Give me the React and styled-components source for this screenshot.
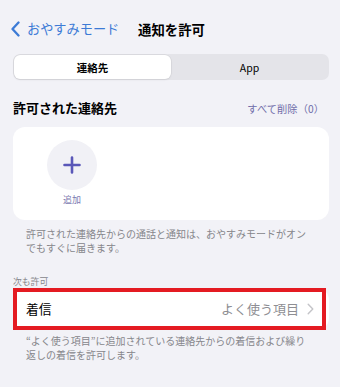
import React from 'react'
import styled, { createGlobalStyle } from 'styled-components'

const GlobalStyle = createGlobalStyle`
  html, body {
    margin: 0;
    padding: 0;
    background: #f2f2f7;
  }
  body {
    font-family: "Noto Sans CJK JP", "Noto Sans", sans-serif;
    color: #000;
    -webkit-font-smoothing: antialiased;
  }
`

const Page = styled.div`
  width: 340px;
  height: 387px;
  overflow: hidden;
  background: #f2f2f7;
`

const Header = styled.header`
  display: flex;
  align-items: center;
  height: 40px;
  padding: 9px 0 0 10px;
`

const Back = styled.div`
  display: flex;
  align-items: center;
  gap: 6px;
  width: 128px;
  color: #3d7bd6;
  font-size: 13.2px;
  line-height: 16px;
  svg {
    display: block;
  }
`

const Title = styled.h1`
  margin: 0;
  font-size: 13.4px;
  line-height: 16px;
  font-weight: 700;
`

const Segmented = styled.div`
  display: grid;
  grid-template-columns: 1fr 1fr;
  margin: 5px 11px 0 13px;
  height: 26px;
  padding: 1px;
  box-sizing: border-box;
  background: #e4e4e9;
  border-radius: 7px;
`

const Segment = styled.div`
  display: flex;
  align-items: center;
  justify-content: center;
  font-size: 10.5px;
  font-weight: ${p => (p.$active ? 700 : 400)};
  border-radius: 6px;
  background: ${p => (p.$active ? '#fff' : 'transparent')};
  box-shadow: ${p => (p.$active ? '0 0 0 0.5px #cfcfd4, 0 1px 2px rgba(0,0,0,0.08)' : 'none')};
`

const SectionHead = styled.div`
  display: flex;
  align-items: center;
  justify-content: space-between;
  margin: 20px 16px 0 13px;
  height: 16px;
`

const SectionTitle = styled.h2`
  margin: 0;
  font-size: 13px;
  line-height: 16px;
  font-weight: 700;
`

const ClearAll = styled.span`
  font-size: 10.2px;
  color: #6f6ca9;
  letter-spacing: 0.1px;
`

const Card = styled.div`
  margin: 0 11px 0 13px;
  background: #fff;
  border-radius: 12px;
`

const ContactCard = styled(Card)`
  margin-top: 11px;
  height: 93px;
  box-sizing: border-box;
  padding: 13px 0 0 34px;
`

const AddButton = styled.div`
  display: flex;
  flex-direction: column;
  align-items: center;
  width: 50px;
`

const AddCircle = styled.div`
  display: flex;
  align-items: center;
  justify-content: center;
  width: 50px;
  height: 50px;
  border-radius: 50%;
  background: #f1f1f6;
`

const AddLabel = styled.span`
  margin-top: 4px;
  font-size: 9px;
  line-height: 12px;
  color: #7b79b0;
`

const Footnote = styled.p`
  margin: ${p => p.$top}px 30px 0 26px;
  font-size: 10px;
  line-height: 14px;
  color: #86868b;
`

const GroupLabel = styled.div`
  margin: 21px 0 0 13px;
  font-size: 8.8px;
  line-height: 12px;
  color: #86868b;
`

const RowWrap = styled.div`
  position: relative;
  margin-top: 0;
`

const Row = styled(Card)`
  display: flex;
  align-items: center;
  height: 42px;
  padding: 0 15px 0 13px;
`

const RowLabel = styled.span`
  flex: 1;
  font-size: 12.8px;
  line-height: 16px;
`

const RowValue = styled.span`
  font-size: 13px;
  line-height: 16px;
  color: #8e8e93;
  margin-right: 8px;
`

const Highlight = styled.div`
  position: absolute;
  left: 13px;
  top: 0;
  width: 313px;
  height: 42px;
  box-sizing: border-box;
  border: 4px solid #e41b22;
  pointer-events: none;
`

export default function App() {
  return (
    <Page>
      <GlobalStyle />
      <Header>
        <Back>
          <svg width="11" height="16" viewBox="0 0 11 16">
            <path d="M8.5 1.5 L2.5 8 L8.5 14.5" fill="none" stroke="#3d7bd6" strokeWidth="2.3" strokeLinecap="round" strokeLinejoin="round" />
          </svg>
          <span>おやすみモード</span>
        </Back>
        <Title>通知を許可</Title>
      </Header>

      <Segmented>
        <Segment $active>連絡先</Segment>
        <Segment>App</Segment>
      </Segmented>

      <SectionHead>
        <SectionTitle>許可された連絡先</SectionTitle>
        <ClearAll>すべて削除（0）</ClearAll>
      </SectionHead>

      <ContactCard>
        <AddButton>
          <AddCircle>
            <svg width="18" height="18" viewBox="0 0 18 18">
              <path d="M9 1.5 V16.5 M1.5 9 H16.5" stroke="#5a57b8" strokeWidth="2.6" strokeLinecap="round" />
            </svg>
          </AddCircle>
          <AddLabel>追加</AddLabel>
        </AddButton>
      </ContactCard>

      <Footnote $top={7}>
        許可された連絡先からの通話と通知は、おやすみモードがオンでもすぐに届きます。
      </Footnote>

      <GroupLabel>次も許可</GroupLabel>

      <RowWrap>
        <Row>
          <RowLabel>着信</RowLabel>
          <RowValue>よく使う項目</RowValue>
          <svg width="7" height="12" viewBox="0 0 7 12">
            <path d="M1.2 1.2 L5.8 6 L1.2 10.8" fill="none" stroke="#c4c4c8" strokeWidth="1.4" strokeLinecap="round" strokeLinejoin="round" />
          </svg>
        </Row>
        <Highlight />
      </RowWrap>

      <Footnote $top={4}>
        “よく使う項目”に追加されている連絡先からの着信および繰り返しの着信を許可します。
      </Footnote>
    </Page>
  )
}
